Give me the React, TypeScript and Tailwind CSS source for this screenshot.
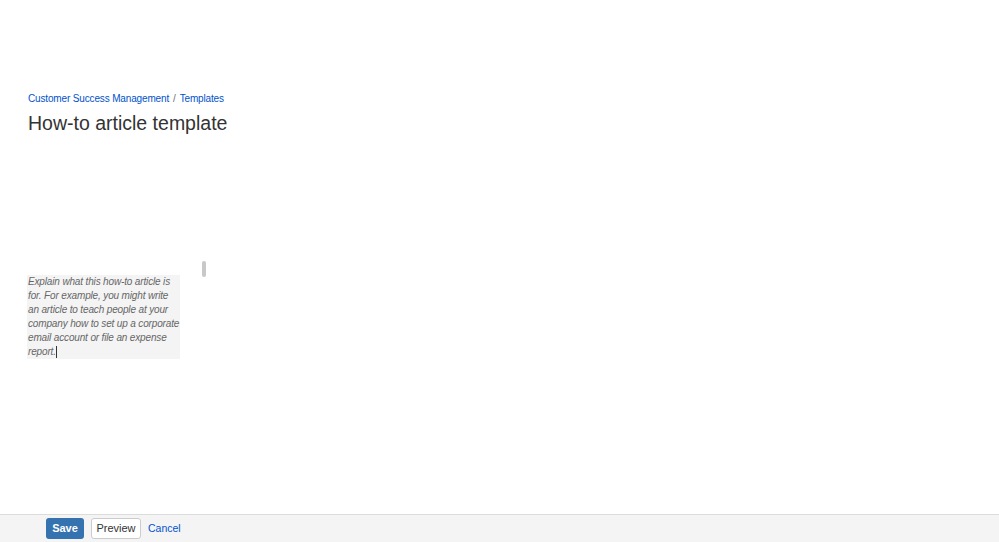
const lines = [
  'Explain what this how-to article is',
  'for. For example, you might write',
  'an article to teach people at your',
  'company how to set up a corporate',
  'email account or file an expense',
];

const App: React.FC = () => {
  return (
    <div className="flex flex-col h-[542px] w-[999px] bg-white font-['Liberation_Sans',Arial,sans-serif]">
      <div className="flex-1 relative">
        <div className="pl-[28px] pt-[92px]">
          <div className="flex items-center text-[10px] leading-[13px] tracking-[-0.15px] text-[#0052cc]">
            <span>Customer Success Management</span>
            <span className="mx-[4px] text-[#707070]">/</span>
            <span>Templates</span>
          </div>
          <h1 className="mt-[5px] text-[19.5px] leading-[26px] text-[#333333]">How-to article template</h1>
        </div>

        <div className="flex pl-[27px] mt-[125px]">
          <div className="w-[153px] mt-[14px] pl-px bg-[#f4f4f4] text-[10px] leading-[14px] tracking-[-0.15px] italic text-[#666666] whitespace-nowrap">
            {lines.map((line) => (
              <div key={line}>{line}</div>
            ))}
            <div>
              report.
              <span className="inline-block w-px h-[12px] bg-[#333333] align-middle"></span>
            </div>
          </div>
          <div className="ml-[22px] w-[4px] h-[16px] rounded-full bg-[#c8c8c8]"></div>
        </div>
      </div>

      <div className="h-[28px] flex items-center gap-[7px] pl-[46px] border-t border-[#dcdcdc] bg-[#f4f4f4]">
        <button className="h-[21px] w-[38px] rounded-[3px] bg-[#3572b0] text-[11px] font-bold text-white">Save</button>
        <button className="h-[21px] w-[50px] rounded-[3px] border border-[#cccccc] bg-white text-[11px] text-[#333333]">Preview</button>
        <button className="text-[10.5px] text-[#0052cc]">Cancel</button>
      </div>
    </div>
  );
};

export default App;
